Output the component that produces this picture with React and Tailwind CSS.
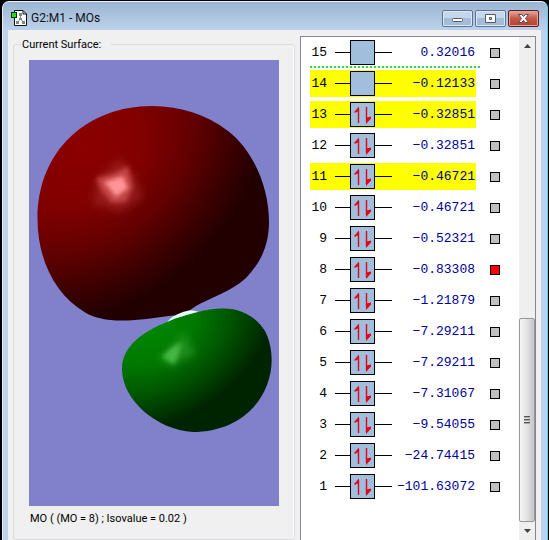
import { useState } from "react";

const orbitals = [
  { number: 15, energy: "0.32016", electrons: 0, marked: false },
  { number: 14, energy: "−0.12133", electrons: 0, marked: true },
  { number: 13, energy: "−0.32851", electrons: 2, marked: true },
  { number: 12, energy: "−0.32851", electrons: 2, marked: false },
  { number: 11, energy: "−0.46721", electrons: 2, marked: true },
  { number: 10, energy: "−0.46721", electrons: 2, marked: false },
  { number: 9, energy: "−0.52321", electrons: 2, marked: false },
  { number: 8, energy: "−0.83308", electrons: 2, marked: false },
  { number: 7, energy: "−1.21879", electrons: 2, marked: false },
  { number: 6, energy: "−7.29211", electrons: 2, marked: false },
  { number: 5, energy: "−7.29211", electrons: 2, marked: false },
  { number: 4, energy: "−7.31067", electrons: 2, marked: false },
  { number: 3, energy: "−9.54055", electrons: 2, marked: false },
  { number: 2, energy: "−24.74415", electrons: 2, marked: false },
  { number: 1, energy: "−101.63072", electrons: 2, marked: false },
];

const AppIcon = () => (
  <svg className="h-4 w-4" viewBox="0 0 16 16" aria-hidden="true">
    <path d="M3.5 .5H12L15.5 4V15.5H3.5Z" fill="#fff" stroke="#111" />
    <path d="M12 .5V4H15.5" fill="none" stroke="#111" />
    <path d="M9.5 4V9L6 12.5M9.5 9L13 12.5" fill="none" stroke="#888" />
    <path d="M8 3h3v3H8zM8 8h3v2H8zM5 11h3v3H5zM11 11h3v3h-3z" fill="#858585" />
    <rect x=".5" y="2.5" width="5" height="5" fill="#1fe01f" stroke="#033803" />
  </svg>
);

const TitleBar = () => {
  const button =
    "flex h-[17px] w-[31px] items-center justify-center rounded-[2px] border border-[#5c7594] bg-linear-to-b from-[#c5d7ec] from-50% to-[#a3bcd8] to-50% shadow-[inset_0_0_0_1px_#dbe7f5]";
  return (
    <header className="flex h-7 shrink-0 items-center justify-between bg-linear-to-b from-[#9bb5d3] to-[#bcd2eb] pl-2 pr-2">
      <div className="flex items-center gap-1 pt-[4px]">
        <AppIcon />
        <h1 className="font-[Roboto,sans-serif] text-[12px] leading-4 text-[#111]">
          G2:M1 - MOs
        </h1>
      </div>
      <div className="flex gap-[2px] pt-[4px]">
        <button className={button} aria-label="Minimize">
          <svg className="h-[11px] w-[13px]" viewBox="0 0 13 11">
            <rect x="1.5" y="5.5" width="10" height="3" rx="1" fill="#fff" stroke="#535b68" />
          </svg>
        </button>
        <button className={button} aria-label="Maximize">
          <svg className="h-[11px] w-[13px]" viewBox="0 0 13 11">
            <path
              d="M1.5 1.5H11.5V9.5H1.5ZM5.5 4.5V6.5H7.5V4.5Z"
              fill="#fff"
              fillRule="evenodd"
              stroke="#535b68"
            />
          </svg>
        </button>
        <button
          className="flex h-[17px] w-[31px] items-center justify-center rounded-[2px] border border-[#5a1d20] bg-linear-to-b from-[#dc9a8d] from-10% via-[#c4594a] via-50% to-[#b8402f] shadow-[inset_0_0_0_1px_#e0a59c]"
          aria-label="Close"
        >
          <svg className="h-[11px] w-[13px]" viewBox="0 0 13 11">
            <path
              d="M1.5 1.5H4.5L6.5 3.5L8.5 1.5H11.5L8.5 5.5L11.5 9.5H8.5L6.5 7.5L4.5 9.5H1.5L4.5 5.5Z"
              fill="#fff"
              stroke="#60484c"
            />
          </svg>
        </button>
      </div>
    </header>
  );
};

const SurfaceView = () => (
  <svg
    className="min-h-0 w-full flex-1 bg-[#8080cb]"
    viewBox="29 60 250 446"
    preserveAspectRatio="xMidYMid slice"
    role="img"
    aria-label="Orbital surface"
  >
    <defs>
      <radialGradient id="red" gradientUnits="userSpaceOnUse" cx="0" cy="0" r="1" gradientTransform="translate(82 148) rotate(-38) scale(200 160)">
        <stop offset="0" stopColor="#8c0000" />
        <stop offset=".35" stopColor="#800000" />
        <stop offset=".6" stopColor="#620000" />
        <stop offset=".82" stopColor="#3c0000" />
        <stop offset="1" stopColor="#220000" />
      </radialGradient>
      <radialGradient id="green" gradientUnits="userSpaceOnUse" cx="0" cy="0" r="1" gradientTransform="translate(152 330) rotate(-28) scale(130 92)">
        <stop offset="0" stopColor="#008600" />
        <stop offset=".35" stopColor="#007800" />
        <stop offset=".65" stopColor="#005400" />
        <stop offset="1" stopColor="#002400" />
      </radialGradient>
      <filter id="soft" x="-50%" y="-50%" width="200%" height="200%">
        <feGaussianBlur stdDeviation="2" />
      </filter>
      <filter id="halo" x="-50%" y="-50%" width="200%" height="200%">
        <feGaussianBlur stdDeviation="4" />
      </filter>
    </defs>
    <path
      d="M152 106C181 106 207 115 228 131C254 151 269 188 269 222C269 245 261 262 246 278C230 292 210 298 196 306C190 310 187 313 180 315C165 316 150 319 135 320C112 322 97 319 86 313C55 295 38 260 37.5 220C37 150 88 106 152 106Z"
      fill="url(#red)"
    />
    <path d="M93 206L96 180L120 158L136 178L143 198L120 213L104 206Z" fill="#b84040" opacity=".4" filter="url(#halo)" />
    <path d="M96 178L113 174L128 166L133 187L126 202L112 203L102 192Z" fill="#e06060" opacity=".6" filter="url(#soft)" />
    <path d="M104 182L123 176L128 188L116 197Z" fill="#ff9494" filter="url(#soft)" />
    <path d="M166 324C170 317 178 313 187 311C191 310 196 311 199 312L190 320Z" fill="#e6ffff" />
    <path
      d="M167 322C178 317 190 314 198 312C206 310 214 308.5 222 308.5C242 308 257 318 265 331C273 347 274 367 267 385C256 414 228 432 193 432C157 430 122 400 122 369C122 345 145 331 167 322Z"
      fill="url(#green)"
    />
    <path d="M159 359L173 345L184 332L190 345L196 354L178 361L174 367Z" fill="#35a035" opacity=".6" filter="url(#halo)" />
    <path d="M162 357L172 347L181 343L178 356L174 364Z" fill="#4ec04e" opacity=".85" filter="url(#soft)" />
  </svg>
);

const LevelBox = ({ electrons }) => (
  <div className="h-[25px] w-[25px] border border-black bg-[#a2bedd]">
    {electrons === 2 ? (
      <svg className="h-[23px] w-[23px]" viewBox="0 0 23 23" aria-hidden="true">
        <path d="M7.5 20V5" stroke="#e00818" strokeWidth="1.4" />
        <path d="M8 3.5V8L3.5 10V8.5Z" fill="#e00818" />
        <path d="M15.5 4V19" stroke="#e00818" strokeWidth="1.4" />
        <path d="M15 21V14.5L20 13.5V15.5Z" fill="#e00818" />
      </svg>
    ) : null}
  </div>
);

const OrbitalRow = ({ orbital, isLumoLimit, selected, onSelect }) => {
  const id = "mo-" + orbital.number;
  return (
    <li className="relative flex h-[31px] items-center pl-[9px]">
      <label
        htmlFor={id}
        className={
          orbital.marked
            ? "flex h-[27px] w-[166px] items-center bg-[#ffff00]"
            : "flex h-[27px] w-[166px] items-center"
        }
      >
        <span className="w-[17px] text-right">{orbital.number}</span>
        <span className="ml-2 h-px w-[15px] bg-black" />
        <LevelBox electrons={orbital.electrons} />
        <span className="h-px w-[17px] bg-black" />
        <span className="flex w-[83px] justify-end text-[#000096]">{orbital.energy}</span>
      </label>
      <input
        id={id}
        type="checkbox"
        checked={selected}
        onChange={() => onSelect(orbital.number)}
        className="ml-[14px] h-[10px] w-[10px] shrink-0 appearance-none border border-black bg-[#c0c0c0] checked:bg-[#ff0000]"
      />
      {isLumoLimit ? (
        <div className="absolute bottom-0 left-[9px] h-[2px] w-[170px] bg-[repeating-linear-gradient(90deg,#3fd04f_0_2px,#e2f8e2_2px_4px)]" />
      ) : null}
    </li>
  );
};

const ScrollBar = () => (
  <div className="flex w-4 shrink-0 flex-col bg-[#efefef]">
    <button className="flex h-[18px] items-center justify-center" aria-label="Scroll up">
      <svg className="h-1 w-[7px]" viewBox="0 0 7 4">
        <path d="M0 4L3.5 0L7 4Z" fill="#444" />
      </svg>
    </button>
    <div className="flex-1" />
    <div className="flex h-[204px] flex-col items-center justify-center gap-px rounded-[2px] border border-[#979797] bg-linear-to-r from-[#f5f5f5] via-[#e3e3e5] to-[#c4c4ca]">
      <span className="h-[2px] w-[6px] border-b border-[#aaa] bg-[#555]" />
      <span className="h-[2px] w-[6px] border-b border-[#aaa] bg-[#555]" />
      <span className="h-[2px] w-[6px] border-b border-[#aaa] bg-[#555]" />
    </div>
    <button className="flex h-[18px] items-center justify-center" aria-label="Scroll down">
      <svg className="h-1 w-[7px]" viewBox="0 0 7 4">
        <path d="M0 0L3.5 4L7 0Z" fill="#444" />
      </svg>
    </button>
  </div>
);

const App = () => {
  const [current, setCurrent] = useState(8);

  return (
    <div className="h-screen overflow-hidden bg-black pl-[2px] pr-px pt-px">
      <div className="flex h-full flex-col overflow-hidden rounded-t-[7px] border-l border-r border-t border-l-[#e4edf7] border-r-[#52d3ef] border-t-[#e9f1f9] bg-[#bdd2eb]">
        <TitleBar />
        <main className="ml-[5px] mr-[6px] flex min-h-0 flex-1 gap-[5px] bg-[#f0f0f0] px-[5px]">
          <fieldset className="mt-[7px] flex min-w-0 flex-1 flex-col rounded-[3px] border border-[#dcdcdf] px-[15px] pb-[13px] pt-2 font-[Roboto,sans-serif] text-[11px] leading-[15px] text-black shadow-[inset_-1px_0_0_#fff]">
            <legend className="-ml-2 pl-px pr-[10px]">Current Surface:</legend>
            <SurfaceView />
            <p className="mt-[5px] pl-px">MO ( (MO = 8) ; Isovalue = 0.02 )</p>
          </fieldset>
          <section className="mt-[6px] flex w-[236px] border-l border-r border-t border-[#828790] bg-white">
            <ul className="flex-1 font-['Liberation_Mono',monospace] text-[13px] leading-4 text-black">
              {orbitals.map((orbital) => (
                <OrbitalRow
                  key={orbital.number}
                  orbital={orbital}
                  isLumoLimit={orbital.number === 15}
                  selected={orbital.number === current}
                  onSelect={setCurrent}
                />
              ))}
            </ul>
            <ScrollBar />
          </section>
        </main>
      </div>
    </div>
  );
};

export default App;
